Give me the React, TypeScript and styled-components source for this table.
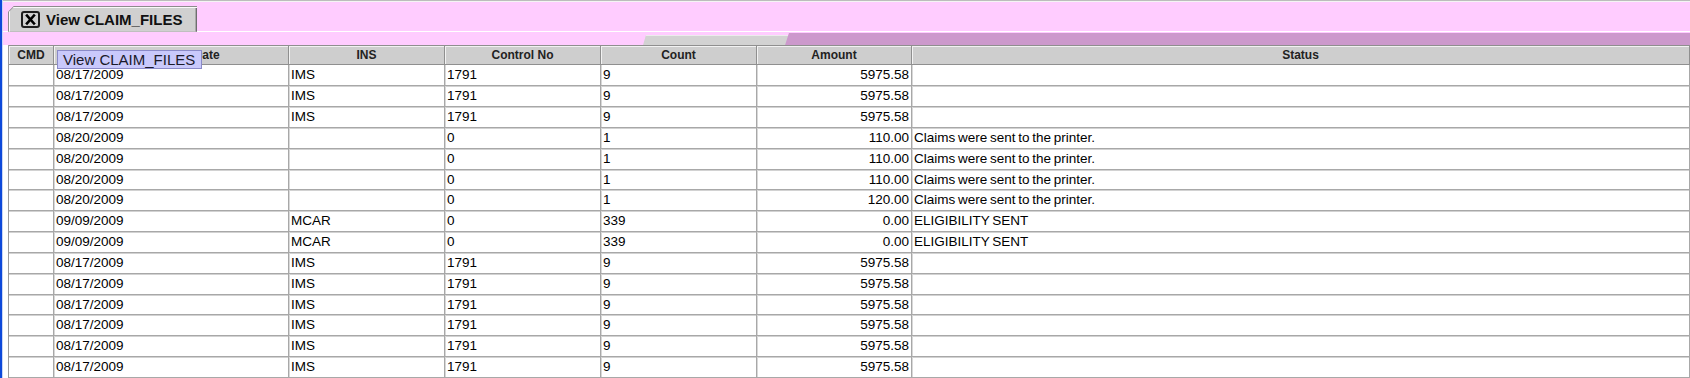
import * as React from 'react';
import styled, { createGlobalStyle } from 'styled-components';

interface ClaimRow {
  date: string,
  ins: string,
  control: string,
  count: string,
  amount: string,
  status: string,
}

const GlobalStyle = createGlobalStyle`
  html, body {
    margin: 0;
    padding: 0;
    background: #fff;
    overflow: hidden;
  }
  body {
    font-family: "Liberation Sans", Arial, sans-serif;
  }
`;

const COLUMNS = '45px 235px 156px 156px 156px 155px 1fr';

const Window = styled.div`
  display: flex;
  width: 1690px;
  height: 378px;
  overflow: hidden;
  background: #fff;
`;

const Edge = styled.div`
  flex: 0 0 2px;
  background: #0d49da;
  border-right: 1px solid #c9d5f5;
`;

const Main = styled.div`
  flex: 1;
  display: flex;
  flex-direction: column;
  min-width: 0;
`;

const TopRule = styled.div`
  height: 1px;
  background: #bcbcbc;
  border-bottom: 1px solid #f4f4f4;
`;

const TabStrip = styled.div`
  display: flex;
  align-items: flex-end;
  height: 30px;
  padding-left: 5px;
  background: #ffccff;
  border-bottom: 1px solid #ffffff;
`;

// dark outline drawn by the frame, the face sits 1px inside it
const TabFrame = styled.div`
  width: 189px;
  height: 26px;
  margin-bottom: -1px;
  padding: 1px 0 0 1px;
  box-sizing: border-box;
  background: #8c8c8c;
  clip-path: polygon(0 6px, 6px 0, 100% 0, 100% 100%, 0 100%);
`;

const Tab = styled.div`
  display: flex;
  align-items: center;
  gap: 6px;
  height: 100%;
  padding-left: 12px;
  box-sizing: border-box;
  background: #d0d0d0;
  clip-path: polygon(0 5px, 5px 0, 100% 0, 100% 100%, 0 100%);
  box-shadow: inset 1px 1px 0 #fafafa, inset -1px 0 0 #6e6e6e, inset -2px 0 0 #a8a8a8;
  font-size: 15px;
  font-weight: bold;
  color: #111;
  white-space: nowrap;
`;

const Band = styled.div`
  display: flex;
  height: 14px;
  background: #ffccff;
`;

const BandGap = styled.div`
  flex: 0 0 640px;
`;

const GreySweep = styled.div`
  flex: 0 0 146px;
  margin-top: 3px;
  background: #d2d2d2;
  border-top: 1px solid #ececec;
  clip-path: polygon(3px 0, 100% 0, 100% 100%, 0 100%);
`;

const PurpleSweep = styled.div`
  flex: 1;
  margin-top: 1px;
  margin-left: -4px;
  background: #cc99cc;
  clip-path: polygon(4px 0, 100% 0, 100% 100%, 0 100%);
`;

const TableArea = styled.div`
  position: relative;
  flex: 1;
  padding-left: 5px;
  background: #fff;
`;

const Table = styled.div`
  border-left: 1px solid #9a9a9a;
`;

const HeaderRow = styled.div`
  display: grid;
  grid-template-columns: ${COLUMNS};
  height: 20px;
  border-top: 1px solid #8f8f8f;
  box-sizing: border-box;
`;

const HeaderCell = styled.div`
  box-sizing: border-box;
  background: #cecece;
  border-right: 1px solid #8f8f8f;
  border-bottom: 1px solid #8f8f8f;
  box-shadow: inset 1px 1px 0 #f2f2f2;
  text-align: center;
  font-size: 12px;
  font-weight: bold;
  line-height: 19px;
  color: #222;
  white-space: nowrap;
  overflow: hidden;
`;

const Row = styled.div`
  display: grid;
  grid-template-columns: ${COLUMNS};
  height: 20.85px;
`;

const Cell = styled.div<{ $align?: 'left' | 'right' }>`
  box-sizing: border-box;
  padding: 0 2px;
  border-right: 1px solid #a8a8a8;
  border-bottom: 1px solid #a8a8a8;
  box-shadow: 0 1px 0 #d2d2d2, 1px 0 0 #d8d8d8;
  text-align: ${p => p.$align ?? 'left'};
  font-size: 13.5px;
  word-spacing: -1px;
  line-height: 20px;
  color: #000;
  white-space: nowrap;
  overflow: hidden;
`;

const Tooltip = styled.div`
  position: absolute;
  left: 54px;
  top: 5px;
  width: 145px;
  height: 19px;
  box-sizing: border-box;
  padding-left: 5px;
  background: #c9c9fb;
  border: 1px solid #8a8ac8;
  font-size: 15px;
  line-height: 17px;
  color: #1a1a2a;
  white-space: nowrap;
`;

const CloseIcon = () => (
  <svg width="19" height="17" viewBox="0 0 19 17">
    <rect x="1" y="1" width="17" height="15" rx="2" fill="none" stroke="#1e1e1e" strokeWidth="2" />
    <path d="M6 4.5 L13 12.5 M13 4.5 L6 12.5" stroke="#000" strokeWidth="2.6" strokeLinecap="square" />
  </svg>
);

const printed = 'Claims were sent to the printer.';
const ims: ClaimRow = { date: '08/17/2009', ins: 'IMS', control: '1791', count: '9', amount: '5975.58', status: '' };
const toPrinter = (amount: string): ClaimRow => ({
  date: '08/20/2009', ins: '', control: '0', count: '1', amount, status: printed,
});
const elig: ClaimRow = {
  date: '09/09/2009', ins: 'MCAR', control: '0', count: '339', amount: '0.00', status: 'ELIGIBILITY SENT',
};

const rows: ClaimRow[] = [
  ims, ims, ims,
  toPrinter('110.00'), toPrinter('110.00'), toPrinter('110.00'), toPrinter('120.00'),
  elig, elig,
  ims, ims, ims, ims, ims, ims,
];

const headers = ['CMD', 'Submission Date', 'INS', 'Control No', 'Count', 'Amount', 'Status'];

const App: React.FC = () => (
  <>
    <GlobalStyle />
    <Window>
      <Edge />
      <Main>
        <TopRule />
        <TabStrip>
          <TabFrame>
            <Tab>
              <CloseIcon />
              View CLAIM_FILES
            </Tab>
          </TabFrame>
        </TabStrip>
        <Band>
          <BandGap />
          <GreySweep />
          <PurpleSweep />
        </Band>
        <TableArea>
          <Table>
            <HeaderRow>
              {headers.map(h => <HeaderCell key={h}>{h}</HeaderCell>)}
            </HeaderRow>
            {rows.map((r, i) => (
              <Row key={i}>
                <Cell />
                <Cell>{r.date}</Cell>
                <Cell>{r.ins}</Cell>
                <Cell>{r.control}</Cell>
                <Cell>{r.count}</Cell>
                <Cell $align="right">{r.amount}</Cell>
                <Cell>{r.status}</Cell>
              </Row>
            ))}
          </Table>
          <Tooltip>View CLAIM_FILES</Tooltip>
        </TableArea>
      </Main>
    </Window>
  </>
);

export default App;
